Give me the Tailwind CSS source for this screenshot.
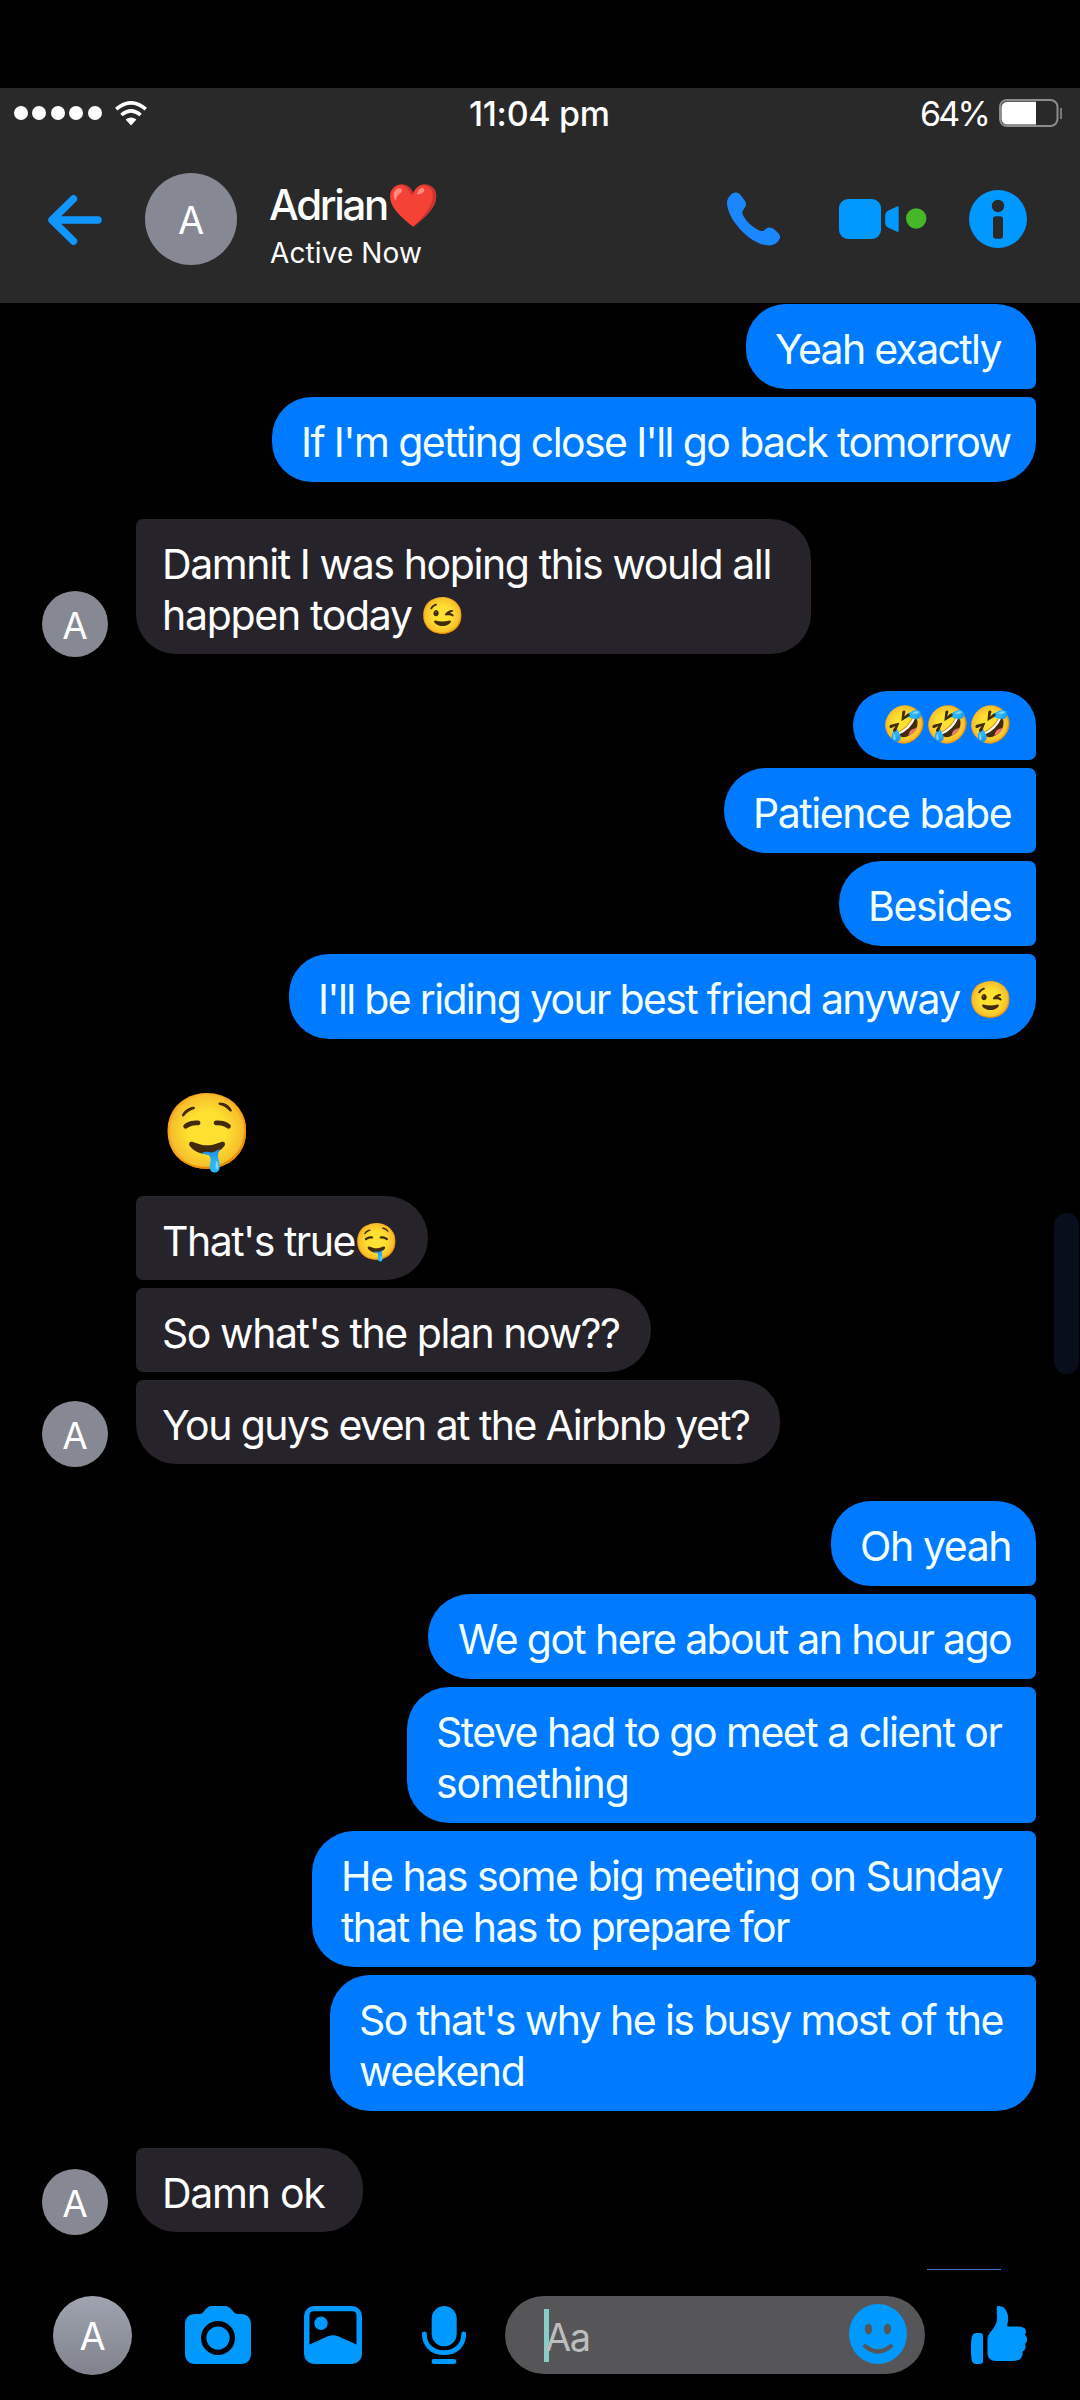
<!DOCTYPE html>
<html lang="en">
<head>
<meta charset="utf-8">
<title>Adrian</title>
<script src="https://cdn.jsdelivr.net/npm/@tailwindcss/browser@4"></script>
</head>
<body class="bg-black">
<div class="relative flex h-[2400px] w-[1080px] flex-col overflow-hidden bg-black pt-[88px] font-['Inter','Noto_Color_Emoji',sans-serif] text-white">

  <header class="h-[215px] shrink-0 bg-[#292929]">
    <div class="flex h-[50px] items-center pl-[14px] pr-[17px]">
      <div class="flex w-[455px] items-center">
        <div class="flex gap-[4.4px]">
          <i class="h-[14px] w-[14px] rounded-full bg-white"></i><i class="h-[14px] w-[14px] rounded-full bg-white"></i><i class="h-[14px] w-[14px] rounded-full bg-white"></i><i class="h-[14px] w-[14px] rounded-full bg-white"></i><i class="h-[14px] w-[14px] rounded-full bg-white"></i>
        </div>
        <svg class="ml-[13px] h-[25px] w-[32px]" viewBox="0 0 32 25" fill="none" stroke="#fff" stroke-width="3.6"><path d="M1.2 8.2Q16-4.6 30.8 8.2"/><path d="M6.4 14Q16 5.8 25.6 14"/><path d="M10.6 18.6Q16 14.6 21.4 18.6L16 24.4Z" fill="#fff" stroke="none"/></svg>
      </div>
      <div class="w-[451px] whitespace-nowrap pt-px text-[34px] font-medium leading-[50px] tracking-[-0.3px]">11:04 pm</div>
      <div class="w-[79px] whitespace-nowrap pt-px text-[34px] leading-[50px] tracking-[-2.8px]">64%</div>
      <svg class="h-[28px] w-[64px]" viewBox="0 0 64 28"><rect x="1" y="1" width="57.5" height="26" rx="7" fill="none" stroke="#8c8c8c" stroke-width="2"/><path d="M37 2.8H8a5.5 5.5 0 0 0-5.500 5.500v12A5.500 5.500 0 0 0 8 25.500h29Z" fill="#fff"/><path d="M62 9v11" stroke="#8c8c8c" stroke-width="1.600"/></svg>
    </div>
    <div class="flex h-[162px] items-center pl-[48px] pr-[53px]">
      <svg class="h-[50px] w-[55px] translate-y-px" viewBox="0 0 55 50" fill="none" stroke="#1097ff" stroke-width="7.400" stroke-linecap="round" stroke-linejoin="round"><path d="M25.500 3.800 4 25 25.500 46.200M4 25H50"/></svg>
      <div class="ml-[42px] flex h-[92px] w-[92px] items-center justify-center rounded-full bg-[#868993] pt-[2px] text-[38px]">A</div>
      <div class="ml-[32px] w-[458px] pt-[15px]">
        <div class="flex h-[50px] items-center whitespace-nowrap text-[42px] font-medium leading-[50px] tracking-[-2.3px]">Adrian<span class="text-[42px] leading-[46px]">❤️</span></div>
        <div class="mt-[3px] whitespace-nowrap pl-px text-[28px] leading-[40px] tracking-[0.1px]">Active Now</div>
      </div>
      <svg class="h-[54px] w-[54px]" viewBox="0 0 54 54" fill="#1a86ff"><path d="M9.500.500C12 .500 14.500 4 18 9c2 3 .8 5.500-1.500 8.500-1.800 2.400-1.400 4.200.5 7.500 4 6.500 10 11 15.500 13.500 2.500 1 4 .6 5.500-1 3-3 6.500-2.500 9.500.300 3.500 3 6.500 5.500 5.300 8.500-1.300 3.700-5.500 7.200-10.800 7.200C24 53.500 0 27.500 0 10.500 0 5 6-.5 9.500.500Z"/></svg>
      <svg class="ml-[58px] h-[40px] w-[88px]" viewBox="0 0 88 40"><rect width="42" height="40" rx="9" fill="#09f"/><path d="M59.700 8.500v23.300q0 1.500-1.500 1L49 28.500q-2.800-1.600-2.800-4V16q0-2.600 2.800-4.200L58 7.500q1.700-.6 1.700 1Z" fill="#09f"/><circle cx="77.200" cy="19.500" r="10.200" fill="#45b729"/></svg>
      <svg class="ml-[42px] h-[58px] w-[58px]" viewBox="0 0 58 58"><circle cx="29" cy="29" r="29" fill="#09f"/><circle cx="29" cy="16" r="6.200" fill="#292929"/><rect x="24" y="26.200" width="10" height="22.500" rx="3" fill="#292929"/></svg>
    </div>
  </header>

  <main class="flex h-[1966px] shrink-0 flex-col overflow-hidden pl-[42px] pr-[44px] pt-px text-[41px] leading-[51px]">

    <section class="flex flex-col items-end gap-2 whitespace-nowrap text-[#f2ffff]">
      <div class="h-[85px] w-[290px] rounded-[40px] rounded-br-[7px] bg-[#007aff] pl-[29px] pt-[20px] tracking-[-1.7px]">Yeah exactly</div>
      <div class="h-[85px] w-[764px] rounded-[40px] rounded-tr-[7px] bg-[#007aff] pl-[29px] pt-[20px] tracking-[-1.62px]">If I'm getting close I'll go back tomorrow</div>
    </section>

    <section class="mt-[37px] flex items-end whitespace-nowrap">
      <div class="-mb-[3px] flex h-[66px] w-[66px] items-center justify-center rounded-full bg-[#868993] pt-[2px] text-[37px]">A</div>
      <div class="ml-[28px] h-[135px] w-[675px] rounded-[40px] rounded-tl-[7px] bg-[#26242a] pl-[26px] pt-[20px]">
        <div class="tracking-[-1.4px]">Damnit I was hoping this would all</div>
        <div class="flex"><span class="tracking-[-1.3px]">happen today</span><span class="ml-[9px] text-[36px] leading-[50px]">😉</span></div>
      </div>
    </section>

    <section class="mt-[37px] flex flex-col items-end gap-2 whitespace-nowrap text-[#f2ffff]">
      <div class="h-[69px] w-[183px] rounded-[36px] rounded-br-[7px] bg-[#007aff] pl-[29px] pt-[8px] text-[36px] tracking-[-1.6px]">🤣🤣🤣</div>
      <div class="h-[85px] w-[312px] rounded-l-[42px] rounded-r-[7px] bg-[#007aff] pl-[29px] pt-[20px] tracking-[-1.45px]">Patience babe</div>
      <div class="h-[85px] w-[197px] rounded-l-[42px] rounded-r-[7px] bg-[#007aff] pl-[29px] pt-[20px] tracking-[-1.35px]">Besides</div>
      <div class="flex h-[85px] w-[747px] rounded-[40px] rounded-tr-[7px] bg-[#007aff] pl-[29px] pt-[20px]"><span class="tracking-[-1.68px]">I'll be riding your best friend anyway</span><span class="ml-[9px] text-[36px] leading-[50px]">😉</span></div>
    </section>

    <section class="flex items-end whitespace-nowrap">
      <div class="-mb-[3px] flex h-[66px] w-[66px] items-center justify-center rounded-full bg-[#868993] pt-[2px] text-[37px]">A</div>
      <div class="ml-[28px] flex flex-col items-start gap-2">
        <div class="-mb-2 h-[157px] pl-[25px] pt-[46px] text-[74px] leading-[90px]">🤤</div>
        <div class="flex h-[84px] w-[292px] rounded-l-[7px] rounded-r-[42px] bg-[#26242a] pl-[26px] pt-[20px]"><span class="tracking-[-1.52px]">That's true</span><span class="-ml-px text-[36px] leading-[50px]">🤤</span></div>
        <div class="h-[84px] w-[515px] rounded-l-[7px] rounded-r-[42px] bg-[#26242a] pl-[26px] pt-[20px] tracking-[-1.46px]">So what's the plan now??</div>
        <div class="h-[84px] w-[644px] rounded-[40px] rounded-tl-[7px] bg-[#26242a] pl-[26px] pt-[20px] tracking-[-1.57px]">You guys even at the Airbnb yet?</div>
      </div>
    </section>

    <section class="mt-[37px] flex flex-col items-end gap-2 whitespace-nowrap text-[#f2ffff]">
      <div class="h-[85px] w-[205px] rounded-[40px] rounded-br-[7px] bg-[#007aff] pl-[29px] pt-[20px] tracking-[-1.4px]">Oh yeah</div>
      <div class="h-[85px] w-[608px] rounded-l-[42px] rounded-r-[7px] bg-[#007aff] pl-[30px] pt-[20px] tracking-[-1.63px]">We got here about an hour ago</div>
      <div class="h-[136px] w-[629px] rounded-l-[42px] rounded-r-[7px] bg-[#007aff] pl-[29px] pt-[20px]">
        <div class="tracking-[-1.52px]">Steve had to go meet a client or</div>
        <div class="tracking-[-1.15px]">something</div>
      </div>
      <div class="h-[136px] w-[724px] rounded-l-[42px] rounded-r-[7px] bg-[#007aff] pl-[29px] pt-[20px]">
        <div class="tracking-[-1.46px]">He has some big meeting on Sunday</div>
        <div class="tracking-[-1.68px]">that he has to prepare for</div>
      </div>
      <div class="h-[136px] w-[706px] rounded-[40px] rounded-tr-[7px] bg-[#007aff] pl-[29px] pt-[20px]">
        <div class="tracking-[-1.62px]">So that's why he is busy most of the</div>
        <div class="tracking-[-1.45px]">weekend</div>
      </div>
    </section>

    <section class="mt-[37px] flex items-end whitespace-nowrap">
      <div class="-mb-[3px] flex h-[66px] w-[66px] items-center justify-center rounded-full bg-[#868993] pt-[2px] text-[37px]">A</div>
      <div class="ml-[28px] h-[84px] w-[227px] rounded-[40px] rounded-tl-[7px] bg-[#26242a] pl-[26px] pt-[20px] tracking-[-1.25px]">Damn ok</div>
    </section>
  </main>

  <div class="mr-[79px] h-px w-[74px] shrink-0 self-end bg-[#3d6fd0]"></div>

  <footer class="flex h-[130px] shrink-0 items-center pl-[53px] pr-[53px]">
    <div class="flex h-[79px] w-[79px] items-center justify-center rounded-full bg-linear-to-b from-[#a0a4b0] to-[#80838d] pt-[2px] text-[38px]">A</div>
    <svg class="ml-[53px] h-[58px] w-[66px]" viewBox="0 0 66 58"><path d="M10 8h4.500c2.500 0 3.500-1.500 5-3.500C21.500 1.800 24 0 28 0h11c4 0 6.500 1.800 8.500 4.500 1.500 2 3 3.500 5.500 3.500h3c6 0 10 4 10 10v30c0 6-4 10-10 10H10C4 58 0 54 0 48V18C0 12 4 8 10 8Z" fill="#09f"/><circle cx="33" cy="32" r="14.300" fill="#09f" stroke="#000" stroke-width="5.400"/></svg>
    <svg class="ml-[53px] h-[58px] w-[58px]" viewBox="0 0 58 58"><rect width="58" height="58" rx="10" fill="#09f"/><path d="M9.500 5.200h39q4 0 4 4.300v29L34 30.300q-5-2.200-10 0L5.500 38.500v-29q0-4.300 4-4.300Z" fill="#000"/><circle cx="17" cy="17.300" r="6.700" fill="#09f"/></svg>
    <svg class="ml-[60px] h-[58px] w-[44px]" viewBox="0 0 44 58"><rect x="9.700" width="25" height="40.300" rx="12.500" fill="#09f"/><path d="M2.400 28C2.400 40 11 46.700 22 46.700S41.700 40 41.700 28" fill="none" stroke="#09f" stroke-width="4.800" stroke-linecap="round"/><rect x="9.700" y="53" width="24.500" height="5" rx="2" fill="#09f"/></svg>
    <div class="ml-[39px] flex h-[78px] w-[420px] items-center rounded-full bg-[#565658] pl-[39px] pr-[18px]">
      <div class="h-[53px] w-[5px] bg-[#84cfc6]"></div>
      <div class="-ml-[4px] flex-1 pt-[4px] text-[38px] text-[#bdbdc0] tracking-[-1.4px]">Aa</div>
      <svg class="h-[60px] w-[58px] -translate-y-px" viewBox="0 0 58 60" fill="#565658"><ellipse cx="29" cy="30" rx="29" ry="30" fill="#09f"/><ellipse cx="19.500" cy="25" rx="3.700" ry="5.200"/><ellipse cx="38.500" cy="25" rx="3.700" ry="5.200"/><path d="M14.800 41Q29 54 43.200 41" fill="none" stroke="#565658" stroke-width="4.300"/></svg>
    </div>
    <svg class="ml-[46px] h-[58px] w-[56px]" viewBox="0 0 56 58" fill="#09f"><path d="M5 27h4q3 0 3 3v25q0 3-3 3H5q-4 0-4.500-5-1.200-10 0-20Q1 27 5 27Z"/><path d="M26.500 0c7.500-.8 11.500 7 10.500 14.500-.4 3-.8 4.500-.5 6h10c5 0 8.200 1.500 8.400 4.500.1 1.500-.3 2.700-1.200 3.500 3.300 2.600 3.100 7.300.3 9.500 1.400 3.500.2 6.500-2.500 7.500.7 6-2.500 9.500-10 9.500H25c-5 0-8.500-3-8.500-8V33c0-3 1.500-5 3.500-7.500 4.500-5.500 6.500-9.500 6-15.500-.3-4-.6-9 .5-10Z"/></svg>
  </footer>

  <div class="absolute right-px top-[1213px] h-[161px] w-[25px] rounded-full bg-[#080e1c]"></div>
</div>
</body>
</html>
